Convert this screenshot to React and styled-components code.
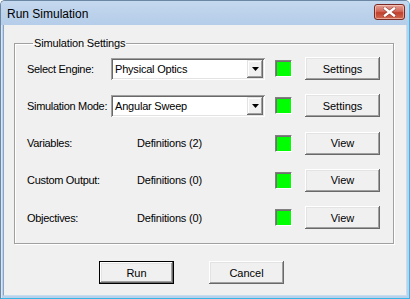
import React from "react";
import styled, { createGlobalStyle } from "styled-components";

const Global = createGlobalStyle`
  html, body { margin: 0; padding: 0; background: #ffffff; }
  body { font-family: "Liberation Sans", Arial, sans-serif; font-size: 11px; color: #000; }
  * { box-sizing: border-box; }
`;

const Window = styled.div`
  width: 410px;
  height: 299px;
  display: flex;
  flex-direction: column;
  background: #b9d1ea;
  border: 1px solid #6c87a3;
  border-right-color: #36b6e6;
  border-bottom-color: #36b6e6;
  border-radius: 5px 5px 0 0;
  box-shadow: inset 1px 1px 0 #d9e7f5;
  padding: 0 2px 2px 2px;
`;

const TitleBar = styled.div`
  height: 24px;
  display: flex;
  align-items: center;
  justify-content: space-between;
  padding: 0 4px 0 4px;
  background: linear-gradient(#c4d8ee, #b5cde9);
  margin: 0 -2px;
  border-radius: 4px 4px 0 0;
`;

const Title = styled.span`
  font-size: 12px;
  color: #000;
  padding-left: 2px;
  padding-top: 1px;
`;

const CloseButton = styled.div`
  width: 31px;
  height: 16px;
  margin-top: -3px;
  border-radius: 3px;
  border: 1px solid #7a2a22;
  background: linear-gradient(#e5a196 0%, #d2695a 45%, #c1412d 55%, #d06a52 100%);
  box-shadow: inset 0 0 0 1px rgba(255, 220, 210, 0.55);
  display: flex;
  align-items: center;
  justify-content: center;
`;

const Client = styled.div`
  flex: 1;
  background: #f0f0f0;
  border: 1px solid #8aa4c2;
  border-top: none;
  border-bottom-color: #c6dcef;
  border-right-color: #c6dcef;
  display: flex;
  flex-direction: column;
  padding: 12px 12px 0 10px;
`;

const Group = styled.fieldset`
  margin: 0;
  padding: 8px 12px 14px 12px;
  border: 1px solid #a0a0a0;
  box-shadow: 1px 1px 0 #ffffff, inset 1px 1px 0 #ffffff;
  min-width: 0;
`;

const Legend = styled.legend`
  padding: 0 1px;
  margin-left: 6px;
  font-size: 11px;
  letter-spacing: -0.15px;
`;

const Rows = styled.div`
  display: grid;
  grid-template-rows: repeat(5, 23px);
  row-gap: 14.25px;
`;

const Row = styled.div`
  display: grid;
  grid-template-columns: 84px 164px 30px 75px;
  align-items: center;
`;

const Label = styled.span`
  white-space: nowrap;
  letter-spacing: -0.3px;
`;

const ValueText = styled.span`
  padding-left: 26px;
  white-space: nowrap;
  letter-spacing: -0.2px;
`;

const Combo = styled.div`
  width: 154px;
  height: 22px;
  background: #fff;
  box-shadow: inset 1px 1px 0 #a0a0a0, inset -1px -1px 0 #ffffff,
    inset 2px 2px 0 #696969, inset -2px -2px 0 #e3e3e3;
  display: flex;
  align-items: center;
  justify-content: space-between;
  padding: 2px;
`;

const ComboText = styled.span`
  padding-left: 2px;
  white-space: nowrap;
  letter-spacing: -0.2px;
`;

const ComboArrow = styled.div`
  width: 16px;
  height: 18px;
  background: #f0f0f0;
  box-shadow: inset -1px -1px 0 #696969, inset 1px 1px 0 #e3e3e3,
    inset -2px -2px 0 #a0a0a0, inset 2px 2px 0 #ffffff;
  display: flex;
  align-items: center;
  justify-content: center;
`;

const Indicator = styled.div`
  width: 17px;
  height: 17px;
  background: #00ff00;
  border: 1px solid;
  border-color: #808080 #ffffff #ffffff #808080;
  box-shadow: inset 1px 1px 0 #707070;
`;

const Button = styled.div`
  width: 75px;
  height: 23px;
  display: flex;
  align-items: center;
  justify-content: center;
  background: #f0f0f0;
  font-size: 11px;
  border: ${(p) => (p.$default ? "1px solid #000" : "none")};
  box-shadow: inset -1px -1px 0 #696969, inset 1px 1px 0 #ffffff,
    inset -2px -2px 0 #a0a0a0, inset 2px 2px 0 #e3e3e3;
`;

const ButtonBar = styled.div`
  display: flex;
  gap: 35px;
  padding: 17px 0 0 85px;
`;

const Arrow = () => (
  <svg width="7" height="4" viewBox="0 0 7 4">
    <path d="M0 0h7L3.5 4z" fill="#000" />
  </svg>
);

const CloseGlyph = () => (
  <svg width="13" height="10" viewBox="0 0 13 10">
    <path
      d="M2 1.5L11 8.5M11 1.5L2 8.5"
      stroke="#5a1a14"
      strokeWidth="3.6"
      strokeLinecap="square"
      opacity="0.5"
    />
    <path
      d="M2 1.5L11 8.5M11 1.5L2 8.5"
      stroke="#fff"
      strokeWidth="2.4"
      strokeLinecap="square"
    />
  </svg>
);

const rows = [
  { label: "Select Engine:", combo: "Physical Optics", button: "Settings" },
  { label: "Simulation Mode:", combo: "Angular Sweep", button: "Settings" },
  { label: "Variables:", text: "Definitions (2)", button: "View" },
  { label: "Custom Output:", text: "Definitions (0)", button: "View" },
  { label: "Objectives:", text: "Definitions (0)", button: "View" },
];

export default function App() {
  return (
    <>
      <Global />
      <Window>
        <TitleBar>
          <Title>Run Simulation</Title>
          <CloseButton>
            <CloseGlyph />
          </CloseButton>
        </TitleBar>
        <Client>
          <Group>
            <Legend>Simulation Settings</Legend>
            <Rows>
              {rows.map((r) => (
                <Row key={r.label}>
                  <Label>{r.label}</Label>
                  {r.combo ? (
                    <Combo>
                      <ComboText>{r.combo}</ComboText>
                      <ComboArrow>
                        <Arrow />
                      </ComboArrow>
                    </Combo>
                  ) : (
                    <ValueText>{r.text}</ValueText>
                  )}
                  <Indicator />
                  <Button>{r.button}</Button>
                </Row>
              ))}
            </Rows>
          </Group>
          <ButtonBar>
            <Button $default>Run</Button>
            <Button>Cancel</Button>
          </ButtonBar>
        </Client>
      </Window>
    </>
  );
}
